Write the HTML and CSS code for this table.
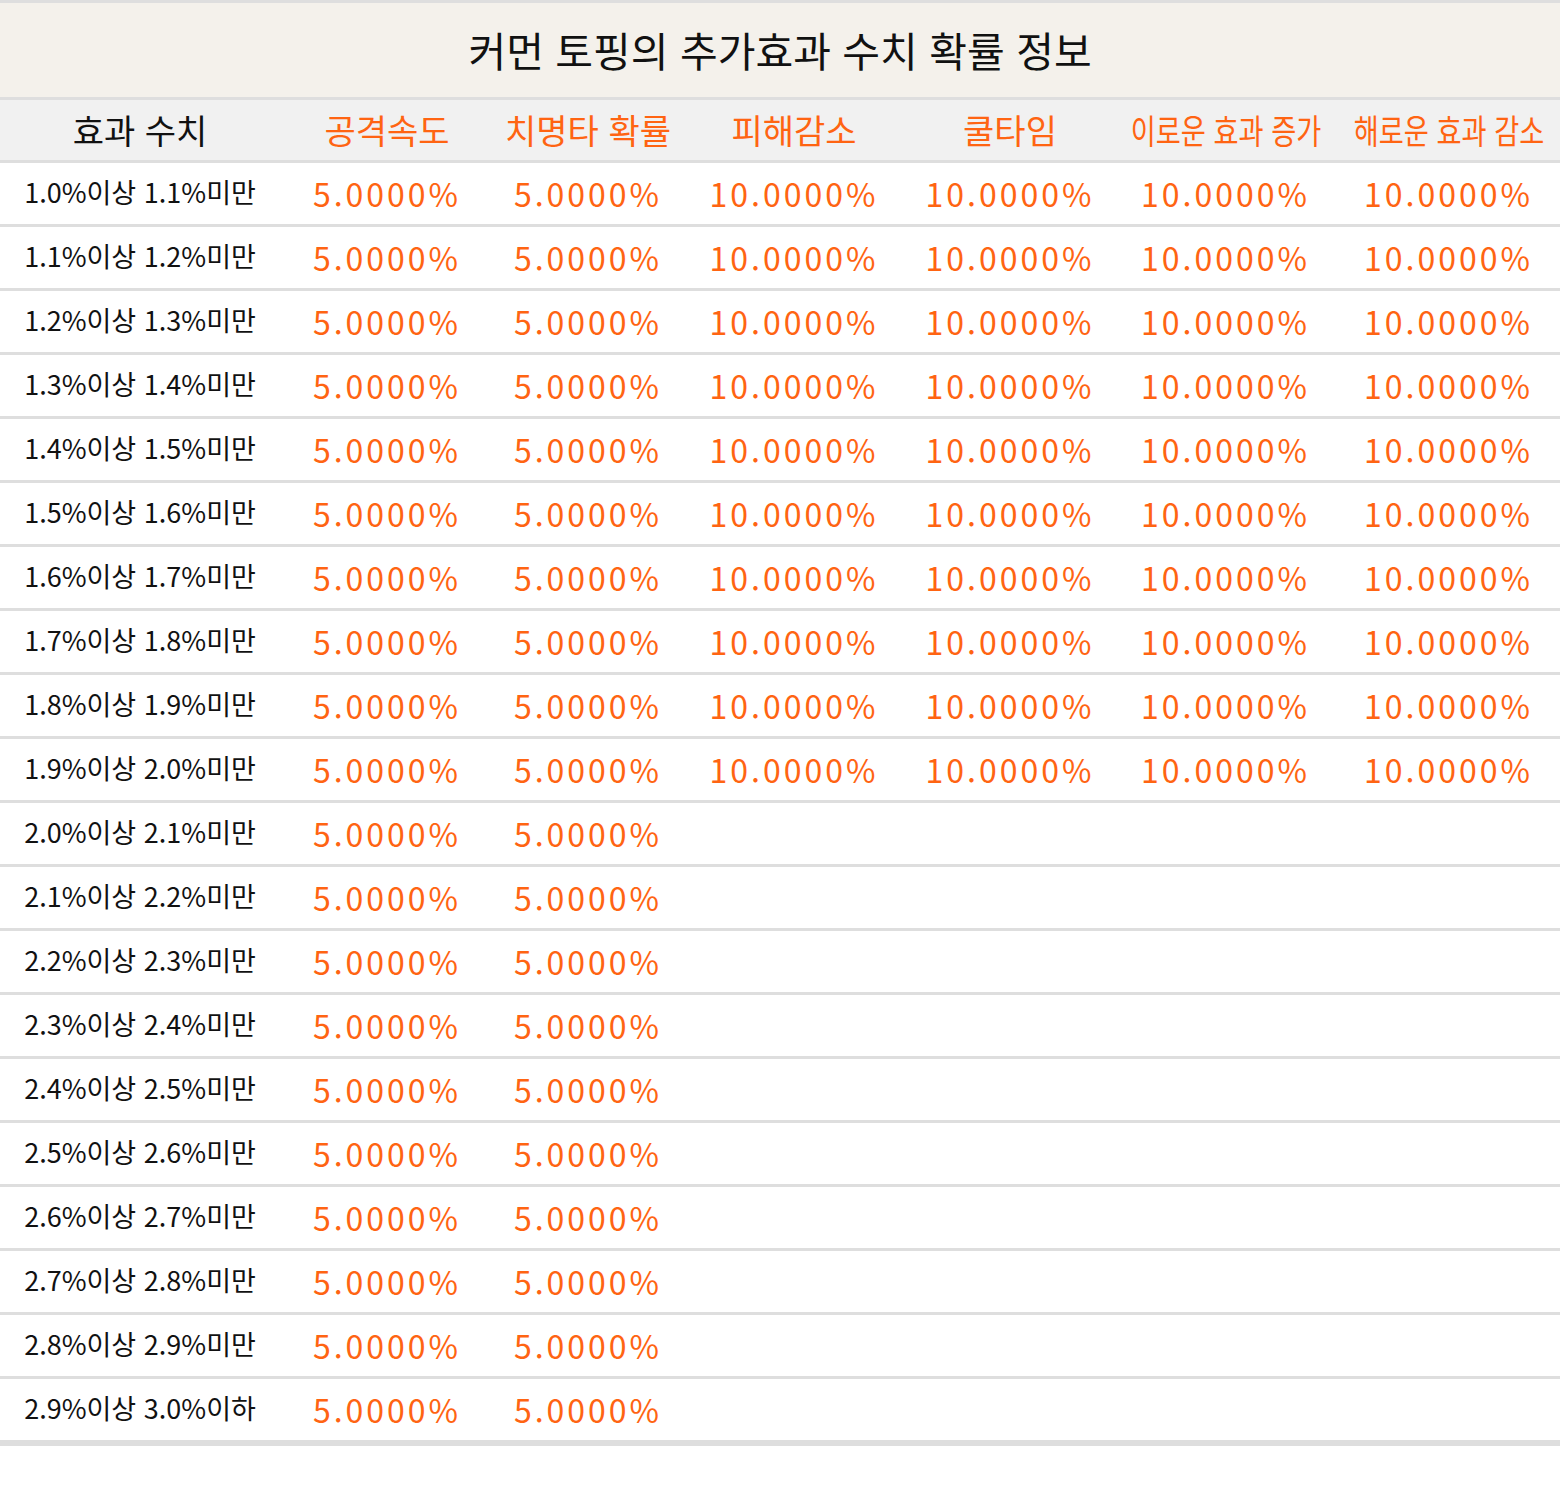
FILE: index.html
```html
<!DOCTYPE html>
<html lang="ko">
<head>
  <meta charset="UTF-8" />
  <meta name="viewport" content="width=device-width, initial-scale=1.0"/>
  <title>커먼 토핑의 추가효과 수치 확률 정보</title>
  <link rel="stylesheet" href="styles.css">
</head>
<body>
  <table class="prob">
    <colgroup>
      <col class="c-label">
      <col class="c-a">
      <col class="c-b">
      <col class="c-c">
      <col class="c-d">
      <col class="c-e">
      <col class="c-f">
    </colgroup>
    <thead>
      <tr class="title-row">
        <th colspan="7">커먼 토핑의 추가효과 수치 확률 정보</th>
      </tr>
      <tr class="head-row">
        <th class="label">효과 수치</th>
        <th>공격속도</th>
        <th>치명타 확률</th>
        <th>피해감소</th>
        <th>쿨타임</th>
        <th><span class="squeeze">이로운 효과 증가</span></th>
        <th><span class="squeeze">해로운 효과 감소</span></th>
      </tr>
    </thead>
    <tbody>
      <tr><td class="label">1.0%이상 1.1%미만</td><td>5.0000%</td><td>5.0000%</td><td>10.0000%</td><td>10.0000%</td><td>10.0000%</td><td>10.0000%</td></tr>
      <tr><td class="label">1.1%이상 1.2%미만</td><td>5.0000%</td><td>5.0000%</td><td>10.0000%</td><td>10.0000%</td><td>10.0000%</td><td>10.0000%</td></tr>
      <tr><td class="label">1.2%이상 1.3%미만</td><td>5.0000%</td><td>5.0000%</td><td>10.0000%</td><td>10.0000%</td><td>10.0000%</td><td>10.0000%</td></tr>
      <tr><td class="label">1.3%이상 1.4%미만</td><td>5.0000%</td><td>5.0000%</td><td>10.0000%</td><td>10.0000%</td><td>10.0000%</td><td>10.0000%</td></tr>
      <tr><td class="label">1.4%이상 1.5%미만</td><td>5.0000%</td><td>5.0000%</td><td>10.0000%</td><td>10.0000%</td><td>10.0000%</td><td>10.0000%</td></tr>
      <tr><td class="label">1.5%이상 1.6%미만</td><td>5.0000%</td><td>5.0000%</td><td>10.0000%</td><td>10.0000%</td><td>10.0000%</td><td>10.0000%</td></tr>
      <tr><td class="label">1.6%이상 1.7%미만</td><td>5.0000%</td><td>5.0000%</td><td>10.0000%</td><td>10.0000%</td><td>10.0000%</td><td>10.0000%</td></tr>
      <tr><td class="label">1.7%이상 1.8%미만</td><td>5.0000%</td><td>5.0000%</td><td>10.0000%</td><td>10.0000%</td><td>10.0000%</td><td>10.0000%</td></tr>
      <tr><td class="label">1.8%이상 1.9%미만</td><td>5.0000%</td><td>5.0000%</td><td>10.0000%</td><td>10.0000%</td><td>10.0000%</td><td>10.0000%</td></tr>
      <tr><td class="label">1.9%이상 2.0%미만</td><td>5.0000%</td><td>5.0000%</td><td>10.0000%</td><td>10.0000%</td><td>10.0000%</td><td>10.0000%</td></tr>
      <tr><td class="label">2.0%이상 2.1%미만</td><td>5.0000%</td><td>5.0000%</td><td></td><td></td><td></td><td></td></tr>
      <tr><td class="label">2.1%이상 2.2%미만</td><td>5.0000%</td><td>5.0000%</td><td></td><td></td><td></td><td></td></tr>
      <tr><td class="label">2.2%이상 2.3%미만</td><td>5.0000%</td><td>5.0000%</td><td></td><td></td><td></td><td></td></tr>
      <tr><td class="label">2.3%이상 2.4%미만</td><td>5.0000%</td><td>5.0000%</td><td></td><td></td><td></td><td></td></tr>
      <tr><td class="label">2.4%이상 2.5%미만</td><td>5.0000%</td><td>5.0000%</td><td></td><td></td><td></td><td></td></tr>
      <tr><td class="label">2.5%이상 2.6%미만</td><td>5.0000%</td><td>5.0000%</td><td></td><td></td><td></td><td></td></tr>
      <tr><td class="label">2.6%이상 2.7%미만</td><td>5.0000%</td><td>5.0000%</td><td></td><td></td><td></td><td></td></tr>
      <tr><td class="label">2.7%이상 2.8%미만</td><td>5.0000%</td><td>5.0000%</td><td></td><td></td><td></td><td></td></tr>
      <tr><td class="label">2.8%이상 2.9%미만</td><td>5.0000%</td><td>5.0000%</td><td></td><td></td><td></td><td></td></tr>
      <tr class="last"><td class="label">2.9%이상 3.0%이하</td><td>5.0000%</td><td>5.0000%</td><td></td><td></td><td></td><td></td></tr>
    </tbody>
  </table>
</body>
</html>
```

FILE: styles.css
```css
body { margin: 0; padding: 0; background: #fff; font-family: "Noto Sans CJK KR", "Noto Sans", sans-serif; color: #111; }
.prob { width: 1560px; border-collapse: separate; border-spacing: 0; table-layout: fixed; }
.c-label { width: 280px; }
.c-a { width: 214px; }
.c-b { width: 188px; }
.c-c { width: 224px; }
.c-d { width: 208px; }
.c-e { width: 223px; }
.c-f { width: 223px; }
.prob th, .prob td { padding: 0; text-align: center; white-space: nowrap; font-weight: normal; line-height: 1.2; }
.title-row th { height: 94px; background: #f4f1eb; border-top: 3px solid #dedede; border-bottom: 3px solid #dedede; font-size: 41px; color: #111; }
.head-row th { height: 60px; background: #f1f1f1; border-bottom: 3px solid #dedede; font-size: 34px; color: #ff6412; }
.head-row th.label { color: #111; }
.squeeze { display: inline-block; margin: 0 -24px; transform: scaleX(0.8); }
.prob td { height: 61px; border-bottom: 3px solid #dedede; font-size: 32px; letter-spacing: 3px; color: #ff6412; }
.prob td.label { height: 58px; padding-bottom: 3px; font-size: 27px; letter-spacing: 0; color: #111; }
.prob tr.last td { border-bottom-width: 6px; }
```
